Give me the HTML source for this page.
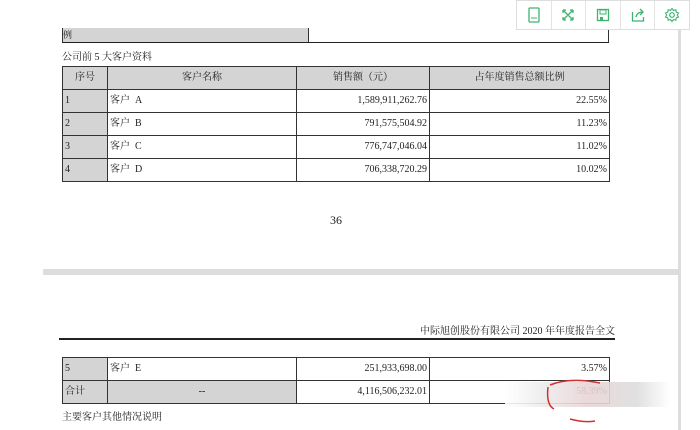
<!DOCTYPE html>
<html><head><meta charset="utf-8"><style>
body{margin:0;width:700px;height:430px;background:#fff;position:relative;overflow:hidden;font-family:"Liberation Serif","Noto Serif CJK SC",serif;color:#222;font-size:10px}
.a{position:absolute}
table{border-collapse:collapse;position:absolute;left:62px;width:547px;table-layout:fixed}
td{border:1px solid #333;height:22px;padding:0 2px;font-size:10px;white-space:nowrap;vertical-align:middle;line-height:12px}
.g{background:#d4d4d4}
.r{text-align:right}.c{text-align:center}
.tb{position:absolute;left:516px;top:0;width:172px;height:28px;border:1px solid #ddd;background:#fff;display:flex}
.tb div{flex:1;border-right:1px solid #e3e3e3;display:flex;align-items:center;justify-content:center}
.tb div:last-child{border-right:none}
</style></head><body>
<div class="a" style="left:62px;top:28px;width:246px;height:14px;background:#d4d4d4;border-left:1px solid #333;font-size:9px;line-height:14px">例</div>
<div class="a" style="left:308px;top:28px;width:1px;height:14px;background:#333"></div>
<div class="a" style="left:608px;top:28px;width:1px;height:14px;background:#333"></div>
<div class="a" style="left:62px;top:42px;width:547px;height:1px;background:#222"></div>
<div class="a" style="left:62px;top:48px">公司前 5 大客户资料</div>
<table style="top:66px">
<colgroup><col style="width:45px"><col style="width:189px"><col style="width:133px"><col style="width:180px"></colgroup>
<tr class="g"><td class="c g" style="height:21px">序号</td><td class="c g">客户名称</td><td class="c g">销售额（元）</td><td class="c g">占年度销售总额比例</td></tr>
<tr><td class="g">1</td><td>客户&nbsp; A</td><td class="r">1,589,911,262.76</td><td class="r">22.55%</td></tr>
<tr><td class="g">2</td><td>客户&nbsp; B</td><td class="r">791,575,504.92</td><td class="r">11.23%</td></tr>
<tr><td class="g">3</td><td>客户&nbsp; C</td><td class="r">776,747,046.04</td><td class="r">11.02%</td></tr>
<tr><td class="g">4</td><td>客户&nbsp; D</td><td class="r">706,338,720.29</td><td class="r">10.02%</td></tr>
</table>
<div class="a" style="left:330px;top:213px;font-size:12px">36</div>
<div class="a" style="left:43px;top:269px;width:637px;height:6px;background:#ddd"></div>
<div class="a" style="left:678px;top:28px;width:3px;height:402px;background:#ddd"></div>
<div class="a" style="right:85px;top:322px;font-size:10px">中际旭创股份有限公司 2020 年年度报告全文</div>
<div class="a" style="left:59px;top:338px;width:556px;height:2px;background:#222"></div>
<table style="top:357px">
<colgroup><col style="width:45px"><col style="width:189px"><col style="width:133px"><col style="width:180px"></colgroup>
<tr><td class="g">5</td><td>客户&nbsp; E</td><td class="r">251,933,698.00</td><td class="r">3.57%</td></tr>
<tr><td class="g">合计</td><td class="c g">--</td><td class="r">4,116,506,232.01</td><td class="r">58.39%</td></tr>
</table>
<div class="a" style="left:505px;top:382px;width:165px;height:25px;background:linear-gradient(90deg,#fff,#eee 20%,#e8d4d6 50%,#ddd 80%,#fff);opacity:.9"></div>
<svg class="a" style="left:540px;top:375px" width="70" height="50"><path d="M10 10 Q30 2 60 8 M8 12 Q6 30 14 34 M30 44 Q45 48 55 46" stroke="#c33" stroke-width="1.5" fill="none"/></svg>
<div class="a" style="left:62px;top:408px">主要客户其他情况说明</div>
<div class="tb">
<div><svg width="14" height="16"><rect x="2" y="1" width="10" height="14" rx="1" fill="none" stroke="#3cb371" stroke-width="1.3"/><line x1="4" y1="11" x2="10" y2="11" stroke="#3cb371"/></svg></div>
<div><svg width="14" height="14"><path d="M2 2L12 12M12 2L2 12M2 2h3M2 2v3M12 2h-3M12 2v3M2 12h3M2 12v-3M12 12h-3M12 12v-3" stroke="#3cb371" stroke-width="1.3" fill="none"/></svg></div>
<div><svg width="14" height="14"><rect x="1.5" y="1.5" width="11" height="11" fill="none" stroke="#3cb371" stroke-width="1.3"/><rect x="4" y="2" width="6" height="4" fill="none" stroke="#3cb371"/><rect x="4" y="9" width="3" height="3" fill="#3cb371"/></svg></div>
<div><svg width="14" height="14"><path d="M1.5 4v9h11v-4M5 9Q6 4 12 4M9 1l3 3-3 3" stroke="#3cb371" stroke-width="1.3" fill="none"/></svg></div>
<div><svg width="16" height="16"><circle cx="8" cy="8" r="2.3" fill="none" stroke="#3cb371" stroke-width="1.2"/><path d="M8 1.5l1.5 2 2.3-.8.4 2.4 2.3.9-1.3 2 1.3 2-2.3.9-.4 2.4-2.3-.8L8 14.5l-1.5-2-2.3.8-.4-2.4-2.3-.9 1.3-2-1.3-2 2.3-.9.4-2.4 2.3.8z" fill="none" stroke="#3cb371" stroke-width="1.1"/></svg></div>
</div>
</body></html>
